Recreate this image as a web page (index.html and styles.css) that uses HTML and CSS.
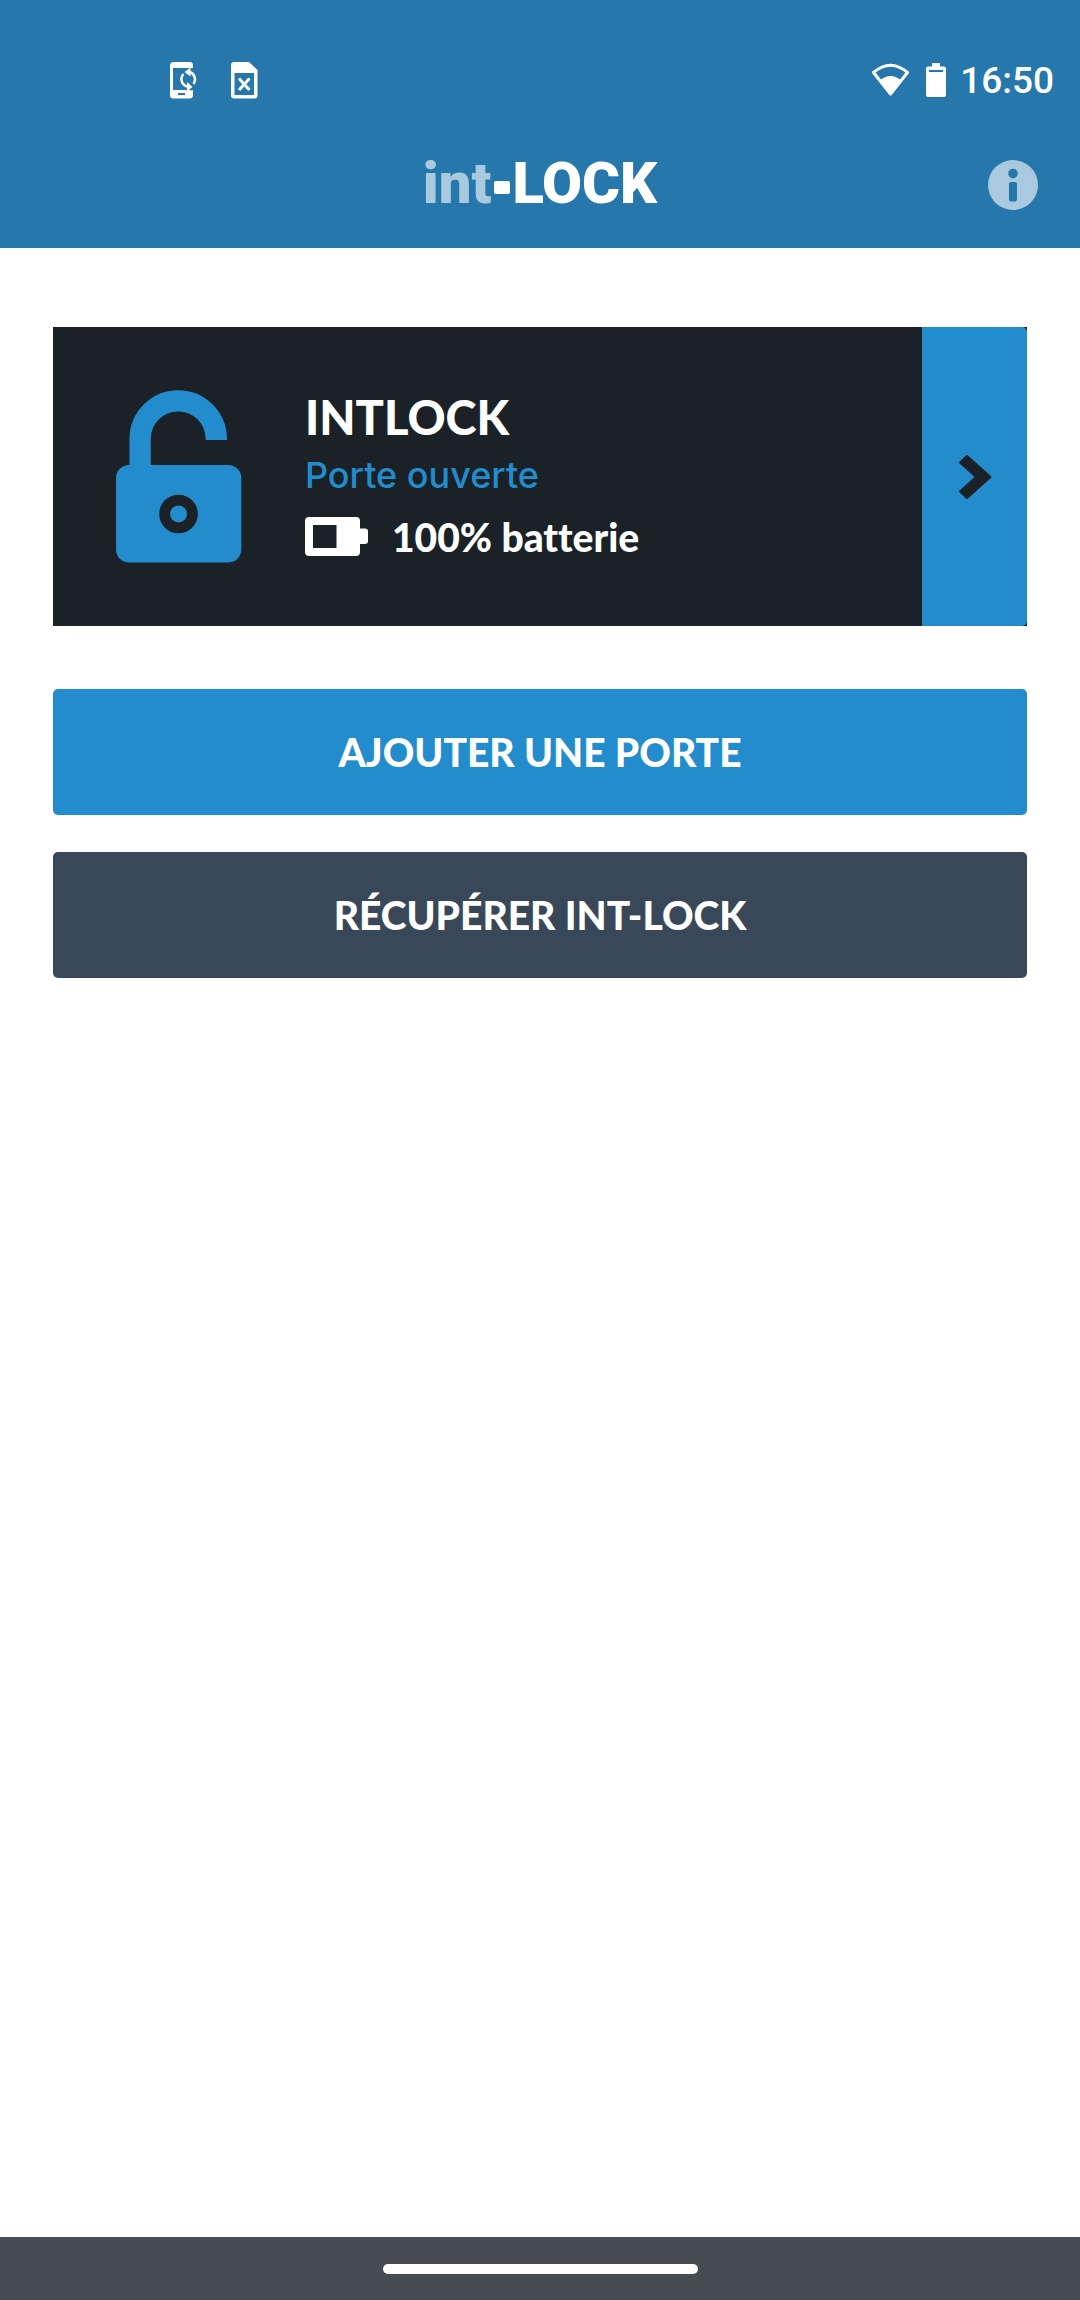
FILE: index.html
```html
<!DOCTYPE html>
<html lang="fr">
<head>
<meta charset="utf-8">
<meta name="viewport" content="width=device-width, initial-scale=1">
<title>int-LOCK</title>
<link rel="stylesheet" href="styles.css">
</head>
<body>
<header class="top">
  <div class="status">
    <div class="status-group">
      <svg class="notif" width="27" height="37" viewBox="0 0 27 37" aria-hidden="true">
        <path fill="#fff" d="M3.500 0H19.500Q23 0 23 3.500V6H3V28H20Q22 29 23 28V33Q23 36.500 19.500 36.500H3.500Q0 36.500 0 33V3.500Q0 0 3.500 0Z"/>
        <path fill="#2678ac" d="M8 31h7v2H8z"/>
        <path fill="none" stroke="#fff" stroke-width="2.500" d="M13.500 12A7.500 7.500 0 0 0 17.500 24.500M20 10A8 8 0 0 1 23.500 22"/>
        <path fill="#fff" d="M20.500 5.500V14.500L14.500 10ZM17 20V29.500L22.500 25Z"/>
      </svg>
      <svg class="notif" width="27" height="37" viewBox="0 0 27 37" aria-hidden="true">
        <path fill="#fff" fill-rule="evenodd" d="M3 0H18L26.500 8V33.500Q26.500 36.500 23.500 36.500H3Q0 36.500 0 33.500V3Q0 0 3 0ZM3.500 11V33H23V11Z"/>
        <path stroke="#fff" stroke-width="3" d="M8 16.500 18.500 28M18.500 16.500 8 28"/>
      </svg>
    </div>
    <div class="status-group">
      <svg width="40" height="34" viewBox="0 0 40 34" aria-hidden="true">
        <path fill="none" stroke="#fff" stroke-width="3" stroke-linejoin="round" d="M2.500 9.500Q19.500-5 36.500 9.500L19.500 31Z"/>
        <path fill="#fff" d="M9.500 17Q19.500 9 29.500 17L19.500 32Z"/>
      </svg>
      <svg class="charge" width="20" height="34" viewBox="0 0 20 34" aria-hidden="true">
        <path fill="#fff" fill-rule="evenodd" d="M6 0h8v3.500h4q2 0 2 2V32q0 2-2 2H2q-2 0-2-2V5.500q0-2 2-2h4ZM3 7v2h14V7Z"/>
      </svg>
      <time class="clock">16:50</time>
    </div>
  </div>
  <div class="bar">
    <h1 class="logo"><span class="logo-int">int</span><span class="logo-dash"></span><span>LOCK</span></h1>
    <button class="info" type="button" aria-label="Informations">
      <svg width="50" height="50" viewBox="0 0 50 50" aria-hidden="true">
        <circle cx="25" cy="25" r="25" fill="#a9c9de"/>
        <circle cx="25" cy="13.500" r="4.800" fill="#2678ac"/>
        <rect x="21" y="22" width="8" height="19.500" rx="2" fill="#2678ac"/>
      </svg>
    </button>
  </div>
</header>
<main class="content">
  <article class="door">
    <svg class="lock" width="126" height="174" viewBox="0 0 126 174" aria-hidden="true">
      <path fill="none" stroke="#238ccd" stroke-width="21.300" d="M24.100 80V49A38.100 38.100 0 0 1 100.300 49V50"/>
      <rect x="0" y="75" width="125.300" height="97.500" rx="13" fill="#238ccd"/>
      <circle cx="62.500" cy="124" r="13.900" fill="none" stroke="#1a2127" stroke-width="10.800"/>
    </svg>
    <div class="details">
      <h2 class="name">INTLOCK</h2>
      <p class="state">Porte ouverte</p>
      <p class="battery">
        <svg width="63" height="39" viewBox="0 0 63 39" aria-hidden="true">
          <path fill="#fff" fill-rule="evenodd" d="M4 0H51Q55 0 55 4V11.500H60Q63 11.500 63 14.500V24Q63 27 60 27H55V35Q55 39 51 39H4Q0 39 0 35V4Q0 0 4 0ZM8 8V31H31.500V8Z"/>
        </svg>
        100% batterie
      </p>
    </div>
    <button class="open" type="button" aria-label="Ouvrir INTLOCK">
      <svg width="34" height="46" viewBox="0 0 34 46" aria-hidden="true">
        <path fill="#1a2127" stroke="#1a2127" stroke-width="2" stroke-linejoin="round" d="M9 2 32.500 23 9 44 2 37.500 18 23 2 8.500Z"/>
      </svg>
    </button>
  </article>
  <div class="actions">
    <button class="action primary" type="button">AJOUTER UNE PORTE</button>
    <button class="action secondary" type="button">RÉCUPÉRER INT-LOCK</button>
  </div>
</main>
<footer class="gesture"><span class="pill"></span></footer>
</body>
</html>
```

FILE: styles.css
```css
* {
  box-sizing: border-box;
}

body {
  margin: 0;
  min-height: 100vh;
  display: flex;
  flex-direction: column;
  background: #fff;
  color: #fff;
  font-family: Lato, "Noto Sans", sans-serif;
  font-variant-ligatures: none;
}

h1,
h2,
p {
  margin: 0;
}

svg {
  display: block;
  flex: none;
}

button {
  border: 0;
  padding: 0;
  color: inherit;
  font-family: inherit;
  cursor: pointer;
}

.top {
  background: #2678ac;
}

.status {
  display: flex;
  justify-content: space-between;
  align-items: center;
  height: 122px;
  padding: 38px 26px 0 170px;
}

.status-group {
  display: flex;
  align-items: center;
}

.notif + .notif {
  margin-left: 34px;
}

.charge {
  margin: 0 14px 0 15px;
}

.clock {
  padding-top: 2px;
  font: 500 37px/48px Roboto, sans-serif;
}

.bar {
  display: grid;
  grid-template-columns: 1fr auto 1fr;
  align-items: center;
  height: 126px;
  padding: 0 42px;
}

.logo {
  grid-column: 2;
  display: flex;
  align-items: center;
  padding-bottom: 4px;
  font: 900 58px/72px Roboto, sans-serif;
}

.logo-int {
  color: #a9c9de;
}

.logo-dash {
  width: 16px;
  height: 13px;
  margin: 8px 2px 0 3px;
  border-radius: 2px;
  background: #fff;
}

.info {
  justify-self: end;
  background: none;
}

.content {
  flex: 1;
  padding: 79px 53px;
}

.door {
  display: flex;
  align-items: center;
  min-height: 299px;
  padding-left: 63px;
  background: #1a2127;
}

.details {
  flex: 1;
  padding-left: 63px;
}

.name {
  font-size: 47px;
  font-weight: 900;
  line-height: 56px;
}

.state {
  padding-top: 2px;
  color: #238ccd;
  font: 500 36px/56px Inter, sans-serif;
}

.battery {
  display: flex;
  align-items: center;
  gap: 24px;
  margin-top: 6px;
  font-size: 39px;
  font-weight: 900;
  line-height: 56px;
}

.open {
  display: flex;
  align-items: center;
  justify-content: center;
  align-self: stretch;
  width: 105px;
  border-radius: 0 5px 5px 0;
  background: #238ccd;
}

.actions {
  display: grid;
  gap: 37px;
  margin-top: 63px;
}

.action {
  height: 126px;
  border-radius: 5px;
  font-size: 39px;
  font-weight: 900;
  line-height: 48px;
}

.primary {
  background: #238ccd;
}

.secondary {
  background: #394858;
}

.gesture {
  display: flex;
  align-items: center;
  justify-content: center;
  height: 63px;
  background: #454d52;
}

.pill {
  width: 315px;
  height: 10px;
  border-radius: 5px;
  background: #fff;
}
```
